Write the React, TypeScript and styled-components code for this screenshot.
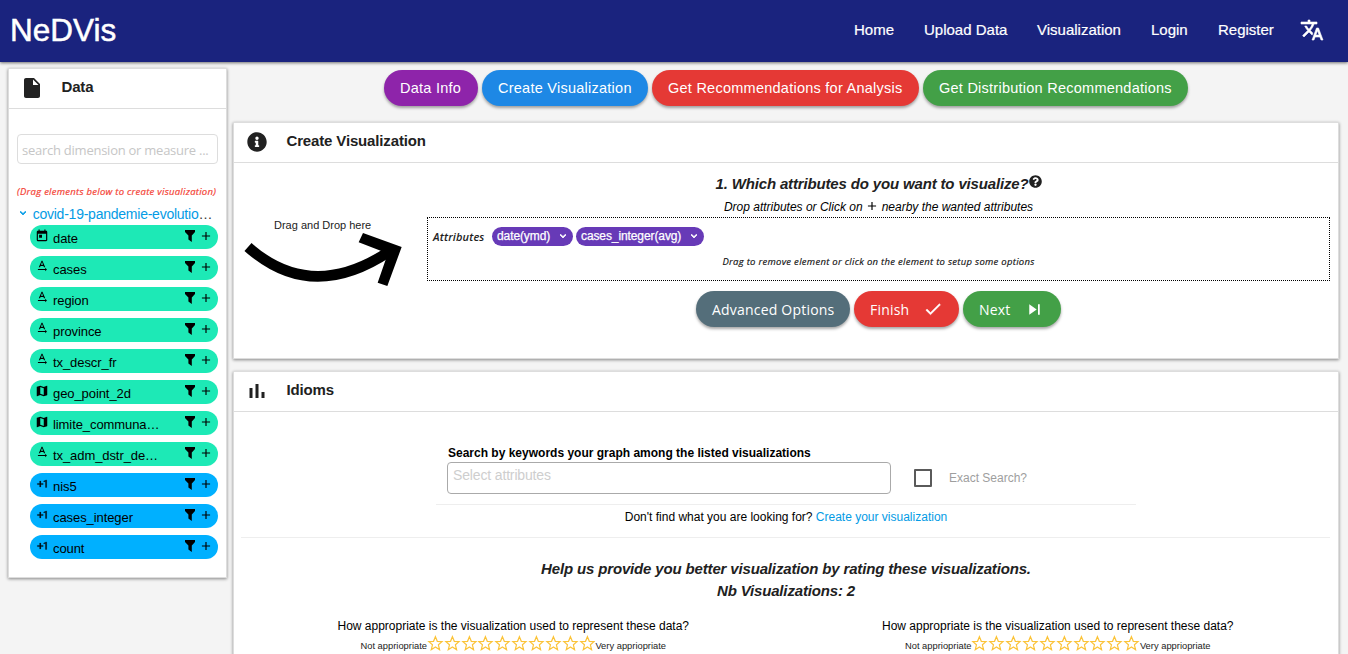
import React from "react";
import styled, { createGlobalStyle } from "styled-components";
import {
  MdInsertDriveFile,
  MdTranslate,
  MdToday,
  MdTextRotationNone,
  MdMap,
  MdExposurePlus1,
  MdCheck,
  MdSkipNext,
  MdAdd,
  MdExpandMore,
} from "react-icons/md";
import { FaInfoCircle, FaQuestionCircle } from "react-icons/fa";

const GlobalStyle = createGlobalStyle`
  * { box-sizing: border-box; }
  html, body { margin: 0; height: 654px; overflow: hidden; background: #f4f4f4; }
  body { font-family: "Liberation Sans", Arial, sans-serif; color: #000; }
  svg { display: block; flex: none; }
`;

const humanist = `"Open Sans", "Noto Sans", sans-serif`;

const Page = styled.div`
  height: 654px;
  overflow: hidden;
  display: flex;
  flex-direction: column;
`;

const NavBar = styled.header`
  flex: none;
  height: 62px;
  background: #1a237e;
  color: #fff;
  display: flex;
  align-items: center;
  justify-content: space-between;
  padding: 0 24px 2px 10px;
  box-shadow: 0 1px 3px rgba(0, 0, 0, 0.55);
`;

const Brand = styled.div`
  font-size: 31.5px;
  line-height: 40px;
  -webkit-text-stroke: 0.5px #fff;
`;

const NavLinks = styled.nav`
  display: flex;
  align-items: center;
  font-size: 15px;
`;

const NavLink = styled.span<{ $w: number }>`
  width: ${(p) => p.$w}px;
  padding-bottom: 2px;
  white-space: nowrap;
  -webkit-text-stroke: 0.2px #fff;
`;

const Columns = styled.div`
  flex: 1;
  min-height: 0;
  display: flex;
  align-items: flex-start;
  gap: 6px;
  padding: 6px 9px 0 8px;
`;

const Card = styled.section<{ $h: number }>`
  height: ${(p) => p.$h}px;
  flex: none;
  background: #fff;
  border: 1px solid #ddd;
  box-shadow: 0 1px 3px rgba(0, 0, 0, 0.45);
`;

const SideCard = styled(Card)`
  width: 219px;
`;

const CardHeader = styled.div`
  height: 40px;
  border-bottom: 1px solid #ddd;
  display: flex;
  align-items: center;
  color: #222;
  padding: 0 0 2px 10.5px;
`;

const HeaderIcon = styled.span`
  width: 24px;
  height: 24px;
  display: flex;
  align-items: center;
  justify-content: center;
`;

const CardTitle = styled.h2`
  margin: -1px 0 0 18px;
  font-size: 15px;
  line-height: 20px;
  letter-spacing: -0.15px;
  font-weight: bold;
  color: #212121;
`;

/* Thickens the visible strokes of an icon, leaving its empty bounds path alone. */
const Heavy = styled.span<{ $by: number }>`
  display: flex;

  path:not([fill="none"]) {
    stroke: currentColor;
    stroke-width: ${(p) => p.$by};
  }
  path[fill="none"] { stroke: none; }
`;

const SearchBox = styled.div`
  margin: 25px 8px 0;
  height: 30px;
  border: 1px solid #ddd;
  border-radius: 4px;
  padding: 1px 0 0 4px;
  font: 13px/28px ${humanist};
  letter-spacing: -0.25px;
  color: #c6c6c6;
  white-space: nowrap;
`;

const Hint = styled.div`
  margin: 21px 0 0 8px;
  font: italic 500 9.5px/14px ${humanist};
  letter-spacing: 0.26px;
  color: #f44336;
  white-space: nowrap;
  -webkit-text-stroke: 0.2px #f44336;
`;

const Source = styled.div`
  display: flex;
  align-items: center;
  height: 16px;
  margin-top: 7px;
  padding-left: 8px;
  color: #039be5;
  font-size: 14px;
  line-height: 16px;
  letter-spacing: -0.24px;
  white-space: nowrap;

  svg { margin-top: -2px; }
  i { color: #333; font-style: normal; }
`;

const SourceName = styled.span`
  margin-left: 3.7px;
`;

const FieldList = styled.div`
  display: flex;
  flex-direction: column;
  gap: 7px;
  margin: 3px 8px 0 21px;
`;

const Field = styled.div<{ $numeric?: boolean }>`
  height: 24px;
  border-radius: 12px;
  background: ${(p) => (p.$numeric ? "#00b0ff" : "#1de9b6")};
  display: flex;
  align-items: flex-start;
  padding: 4px 5.5px 0 5px;
`;

const FieldIcon = styled.span<{ $raised?: boolean }>`
  width: 14px;
  height: 14px;
  margin-top: ${(p) => (p.$raised ? -1 : 0)}px;
  display: flex;
  justify-content: center;
`;

const FieldName = styled.span`
  flex: 1;
  margin: 2px 0 0 4px;
  font-size: 13px;
  line-height: 16px;
  letter-spacing: -0.08px;
`;

const FilterGlyph = styled.svg`
  margin: 1px 3.5px 0 0;
`;

const Main = styled.main`
  flex: 1;
  min-width: 0;
  display: flex;
  flex-direction: column;
`;

const ButtonRow = styled.div<{ $top: number }>`
  display: flex;
  justify-content: center;
  gap: 4px;
  margin-top: ${(p) => p.$top}px;
`;

const Button = styled.button<{ $bg: string; $w: number; $humanist?: boolean }>`
  width: ${(p) => p.$w}px;
  height: 36px;
  border: 0;
  border-radius: 18px;
  padding: 0 16px;
  display: flex;
  align-items: center;
  justify-content: space-between;
  background: ${(p) => p.$bg};
  color: #fff;
  white-space: nowrap;
  font-family: ${(p) => (p.$humanist ? humanist : `"Liberation Sans", Arial, sans-serif`)};
  font-size: ${(p) => (p.$humanist ? 14 : 14.5)}px;
  letter-spacing: ${(p) => (p.$humanist ? 0.2 : 0.25)}px;
  box-shadow: 0 2px 3px rgba(0, 0, 0, 0.35);
`;

const CreateCard = styled(Card)`
  margin-top: 16px;
`;

const IdiomsCard = styled(Card)`
  margin-top: 12px;
`;

const Workspace = styled.div`
  display: flex;
  padding: 0 8px 0 10px;
`;

const DropGuide = styled.div`
  width: 183px;
  padding-top: 54px;
`;

const GuideText = styled.div`
  font-size: 11px;
  line-height: 16px;
  height: 16px;
  padding-left: 30px;
  color: #222;
`;

const Builder = styled.div`
  flex: 1;
  padding-top: 10px;
`;

const Question = styled.h3`
  margin: 0;
  display: flex;
  justify-content: center;
  font: italic bold 15px/22px "Liberation Sans", Arial, sans-serif;
  letter-spacing: -0.155px;
  color: #212121;

  svg { margin-top: 2px; }
`;

const QuestionNote = styled.div`
  display: flex;
  justify-content: center;
  font-size: 12px;
  font-style: italic;
  line-height: 24px;
  height: 22px;

  svg { margin: 4px 3px 0 2px; }
`;

const DropZone = styled.div`
  height: 64px;
  border: 1px dotted #000;
  padding: 9px 5px 0;
`;

const ChipRow = styled.div`
  display: flex;
  gap: 3px;
  height: 19px;
`;

const ChipLabel = styled.span`
  width: 56px;
  font: italic 600 11px/20px ${humanist};
  letter-spacing: 0.15px;
  color: #222;
`;

const Chip = styled.span<{ $w: number }>`
  width: ${(p) => p.$w}px;
  height: 19px;
  border-radius: 10px;
  background: #673ab7;
  color: #fff;
  font-size: 12px;
  line-height: 19px;
  letter-spacing: -0.1px;
  display: flex;
  align-items: center;
  justify-content: space-between;
  padding: 0 4px 0 5px;
  -webkit-text-stroke: 0.25px #fff;

  svg { margin-top: -2px; }
`;

const ZoneHint = styled.div`
  margin-top: 9px;
  text-align: center;
  font: italic 500 9.5px/14px ${humanist};
  letter-spacing: 0.28px;
  color: #111;
  -webkit-text-stroke: 0.15px #111;
`;

const SearchRow = styled.div`
  display: flex;
  margin: 33px 0 0 213px;
`;

const KeywordBlock = styled.div`
  width: 444px;
`;

const KeywordLabel = styled.div`
  font-size: 12px;
  font-weight: bold;
  line-height: 17px;
  padding-left: 1px;
`;

const KeywordInput = styled.div`
  height: 32px;
  border: 1px solid #aaa;
  border-radius: 4px;
  padding-left: 5px;
  font-size: 14px;
  line-height: 25px;
  letter-spacing: -0.15px;
  color: #cecece;
`;

const ExactSearch = styled.div`
  display: flex;
  align-items: center;
  height: 18px;
  margin: 24px 0 0 23px;
  font-size: 12px;
  color: #9e9e9e;
`;

const CheckBox = styled.span`
  width: 18px;
  height: 18px;
  border: 2px solid #5a5a5a;
  border-radius: 1px;
  margin-right: 17px;
`;

const Rule = styled.div<{ $top: number; $left: number; $right: number }>`
  height: 1px;
  background: #eee;
  margin: ${(p) => p.$top}px ${(p) => p.$right}px 0 ${(p) => p.$left}px;
`;

const NotFound = styled.div`
  margin-top: 3px;
  height: 18px;
  font-size: 12px;
  line-height: 18px;
  text-align: center;

  a { color: #039be5; }
`;

const RatingHeading = styled.div`
  margin-top: 20px;
`;

const RatingColumns = styled.div`
  display: grid;
  grid-template-columns: 1fr 1fr;
  margin: 15px 8px 0 7px;
`;

const Rating = styled.div`
  display: flex;
  flex-direction: column;
  align-items: center;
  font-size: 12px;
  line-height: 18px;
`;

const StarRow = styled.div`
  display: flex;
  align-items: center;
  height: 16px;
  font-size: 9.35px;
  color: #222;

  span { padding-top: 5px; }
`;

const fields: { name: string; kind: "date" | "text" | "geo" | "number" }[] = [
  { name: "date", kind: "date" },
  { name: "cases", kind: "text" },
  { name: "region", kind: "text" },
  { name: "province", kind: "text" },
  { name: "tx_descr_fr", kind: "text" },
  { name: "geo_point_2d", kind: "geo" },
  { name: "limite_communa…", kind: "geo" },
  { name: "tx_adm_dstr_de…", kind: "text" },
  { name: "nis5", kind: "number" },
  { name: "cases_integer", kind: "number" },
  { name: "count", kind: "number" },
];

const kindIcons = {
  date: MdToday,
  text: MdTextRotationNone,
  geo: MdMap,
  number: MdExposurePlus1,
};

const Filter = () => (
  <FilterGlyph width="10" height="12" viewBox="0 0 10 12">
    <path d="M0 0h10v2L6.8 5.6V12L3.4 9.4V5.6L0 2z" />
  </FilterGlyph>
);

const Bars = () => (
  <svg width="24" height="24" viewBox="0 0 24 24" fill="#212121">
    <path d="M4.5 9h3v10h-3zM10.5 5h3v14h-3zM16.5 13h3v6h-3z" />
  </svg>
);

const Chevron = () => (
  <Heavy $by={1.4}>
    <MdExpandMore size={12} />
  </Heavy>
);

const Star = () => (
  <svg width="16.85" height="17" viewBox="0 0 17 17">
    <path
      d="M8.5 1.6L10.4 6.3L15.2 6.6L11.5 9.8L12.7 14.8L8.5 12.1L4.3 14.8L5.5 9.8L1.8 6.6L6.6 6.3Z"
      fill="none"
      stroke="#fbc338"
      strokeWidth="1.2"
    />
  </svg>
);

const CurvedArrow = () => (
  <svg width="158" height="53.5" viewBox="43 338 474 160.5">
    <path d="M55 380Q245 549 478 394" fill="none" stroke="#000" strokeWidth="32" />
    <path d="M400 338L516 380L473 497L444 487L470 412L455 392L387 366Z" />
  </svg>
);

const RatingBlock = () => (
  <Rating>
    <div>How appropriate is the visualization used to represent these data?</div>
    <StarRow>
      <span>Not appriopriate</span>
      {Array.from({ length: 10 }, (_, i) => (
        <Star key={i} />
      ))}
      <span>Very appriopriate</span>
    </StarRow>
  </Rating>
);

export default function App() {
  return (
    <Page>
      <GlobalStyle />
      <NavBar>
        <Brand>NeDVis</Brand>
        <NavLinks>
          <NavLink $w={70}>Home</NavLink>
          <NavLink $w={113}>Upload Data</NavLink>
          <NavLink $w={114}>Visualization</NavLink>
          <NavLink $w={67}>Login</NavLink>
          <NavLink $w={82}>Register</NavLink>
          <Heavy $by={0.6}>
            <MdTranslate size={24} />
          </Heavy>
        </NavLinks>
      </NavBar>
      <Columns>
        <SideCard $h={510}>
          <CardHeader>
            <HeaderIcon>
              <MdInsertDriveFile size={24} />
            </HeaderIcon>
            <CardTitle>Data</CardTitle>
          </CardHeader>
          <SearchBox>search dimension or measure ...</SearchBox>
          <Hint>(Drag elements below to create visualization)</Hint>
          <Source>
            <Chevron />
            <SourceName>
              covid-19-pandemie-evolutio<i>…</i>
            </SourceName>
          </Source>
          <FieldList>
            {fields.map((f) => {
              const Icon = kindIcons[f.kind];
              const numeric = f.kind === "number";
              return (
                <Field key={f.name} $numeric={numeric}>
                  <FieldIcon $raised={f.kind === "text"}>
                    <Heavy $by={numeric ? 0.4 : 0}>
                      <Icon size={14} />
                    </Heavy>
                  </FieldIcon>
                  <FieldName>{f.name}</FieldName>
                  <Filter />
                  <MdAdd size={14} />
                </Field>
              );
            })}
          </FieldList>
        </SideCard>
        <Main>
          <ButtonRow $top={2}>
            <Button $bg="#8e24aa" $w={94}>Data Info</Button>
            <Button $bg="#1e88e5" $w={166}>Create Visualization</Button>
            <Button $bg="#e53935" $w={267}>Get Recommendations for Analysis</Button>
            <Button $bg="#43a047" $w={265}>Get Distribution Recommendations</Button>
          </ButtonRow>
          <CreateCard $h={237}>
            <CardHeader>
              <HeaderIcon>
                <FaInfoCircle size={20} />
              </HeaderIcon>
              <CardTitle>Create Visualization</CardTitle>
            </CardHeader>
            <Workspace>
              <DropGuide>
                <GuideText>Drag and Drop here</GuideText>
                <CurvedArrow />
              </DropGuide>
              <Builder>
                <Question>
                  1. Which attributes do you want to visualize?
                  <FaQuestionCircle size={13} />
                </Question>
                <QuestionNote>
                  Drop attributes or Click on <MdAdd size={14} /> nearby the wanted attributes
                </QuestionNote>
                <DropZone>
                  <ChipRow>
                    <ChipLabel>Attributes</ChipLabel>
                    <Chip $w={81}>
                      date(ymd) <Chevron />
                    </Chip>
                    <Chip $w={128}>
                      cases_integer(avg) <Chevron />
                    </Chip>
                  </ChipRow>
                  <ZoneHint>Drag to remove element or click on the element to setup some options</ZoneHint>
                </DropZone>
                <ButtonRow $top={10}>
                  <Button $bg="#546e7a" $w={154} $humanist>Advanced Options</Button>
                  <Button $bg="#e53935" $w={105} $humanist>
                    Finish
                    <Heavy $by={0.5}>
                      <MdCheck size={20} />
                    </Heavy>
                  </Button>
                  <Button $bg="#43a047" $w={98} $humanist>
                    Next <MdSkipNext size={21} />
                  </Button>
                </ButtonRow>
              </Builder>
            </Workspace>
          </CreateCard>
          <IdiomsCard $h={400}>
            <CardHeader>
              <HeaderIcon>
                <Bars />
              </HeaderIcon>
              <CardTitle>Idioms</CardTitle>
            </CardHeader>
            <SearchRow>
              <KeywordBlock>
                <KeywordLabel>Search by keywords your graph among the listed visualizations</KeywordLabel>
                <KeywordInput>Select attributes</KeywordInput>
              </KeywordBlock>
              <ExactSearch>
                <CheckBox />
                Exact Search?
              </ExactSearch>
            </SearchRow>
            <Rule $top={10} $left={202} $right={202} />
            <NotFound>
              Don't find what you are looking for? <a>Create your visualization</a>
            </NotFound>
            <Rule $top={11} $left={7} $right={8} />
            <RatingHeading>
              <Question>Help us provide you better visualization by rating these visualizations.</Question>
              <Question>Nb Visualizations: 2</Question>
            </RatingHeading>
            <RatingColumns>
              <RatingBlock />
              <RatingBlock />
            </RatingColumns>
          </IdiomsCard>
        </Main>
      </Columns>
    </Page>
  );
}
